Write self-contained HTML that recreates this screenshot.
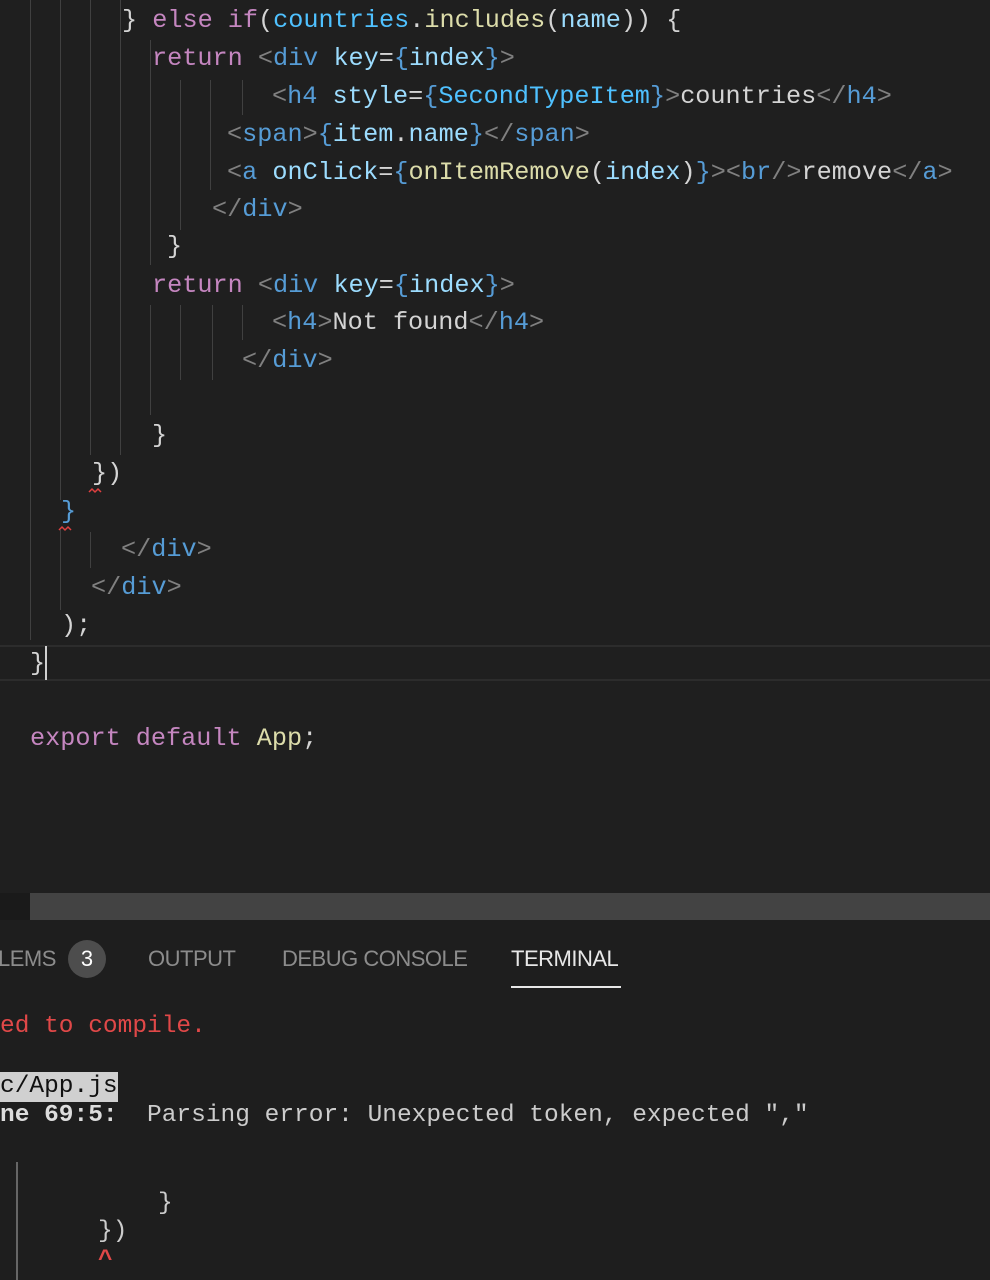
<!DOCTYPE html>
<html><head><meta charset="utf-8"><style>
*{margin:0;padding:0;box-sizing:border-box}
body{width:990px;height:1280px;background:#1f1f1f;overflow:hidden;position:relative;font-family:"Liberation Mono",monospace}
.l{position:absolute;font-size:25.2px;line-height:38px;white-space:pre;color:#d4d4d4;margin-top:2px}
.g{position:absolute;width:1px;background:#404040}
.k{color:#c586c0}.t{color:#808080}.n{color:#569cd6}.a{color:#9cdcfe}.b{color:#569cd6}.v{color:#4fc1ff}.f{color:#dcdcaa}.w{color:#d4d4d4}
.tab{position:absolute;top:946px;font-family:"Liberation Sans",sans-serif;font-size:22px;color:#8c8c8c;letter-spacing:-0.5px}
.m{position:absolute;font-size:24.5px;line-height:30px;white-space:pre;color:#cccccc}
</style></head><body>
<div class="g" style="left:30px;top:0;height:640px"></div>
<div class="g" style="left:60px;top:0;height:500px"></div>
<div class="g" style="left:60px;top:530px;height:80px"></div>
<div class="g" style="left:90px;top:0;height:455px"></div>
<div class="g" style="left:90px;top:532px;height:36px"></div>
<div class="g" style="left:120px;top:0;height:455px"></div>
<div class="g" style="left:150px;top:40px;height:225px"></div>
<div class="g" style="left:150px;top:305px;height:110px"></div>
<div class="g" style="left:180px;top:80px;height:150px"></div>
<div class="g" style="left:180px;top:305px;height:75px"></div>
<div class="g" style="left:210px;top:80px;height:110px"></div>
<div class="g" style="left:212px;top:305px;height:75px"></div>
<div class="g" style="left:242px;top:80px;height:35px"></div>
<div class="g" style="left:242px;top:305px;height:35px"></div>
<div style="position:absolute;left:0;top:645px;width:990px;height:36px;border-top:2px solid #2c2c2c;border-bottom:2px solid #2c2c2c"></div>

<div class="l" style="left:122px;top:0px"><span class="w">} </span><span class="k">else if</span><span class="w">(</span><span class="v">countries</span><span class="w">.</span><span class="f">includes</span><span class="w">(</span><span class="a">name</span><span class="w">)) {</span></div>
<div class="l" style="left:152px;top:38px"><span class="k">return</span> <span class="t">&lt;</span><span class="n">div</span> <span class="a">key</span><span class="w">=</span><span class="b">{</span><span class="a">index</span><span class="b">}</span><span class="t">&gt;</span></div>
<div class="l" style="left:272px;top:76px"><span class="t">&lt;</span><span class="n">h4</span> <span class="a">style</span><span class="w">=</span><span class="b">{</span><span class="v">SecondTypeItem</span><span class="b">}</span><span class="t">&gt;</span>countries<span class="t">&lt;/</span><span class="n">h4</span><span class="t">&gt;</span></div>
<div class="l" style="left:227px;top:114px"><span class="t">&lt;</span><span class="n">span</span><span class="t">&gt;</span><span class="b">{</span><span class="a">item</span>.<span class="a">name</span><span class="b">}</span><span class="t">&lt;/</span><span class="n">span</span><span class="t">&gt;</span></div>
<div class="l" style="left:227px;top:152px"><span class="t">&lt;</span><span class="n">a</span> <span class="a">onClick</span>=<span class="b">{</span><span class="f">onItemRemove</span>(<span class="a">index</span>)<span class="b">}</span><span class="t">&gt;&lt;</span><span class="n">br</span><span class="t">/&gt;</span>remove<span class="t">&lt;/</span><span class="n">a</span><span class="t">&gt;</span></div>
<div class="l" style="left:212px;top:189px"><span class="t">&lt;/</span><span class="n">div</span><span class="t">&gt;</span></div>
<div class="l" style="left:167px;top:226px">}</div>
<div class="l" style="left:152px;top:265px"><span class="k">return</span> <span class="t">&lt;</span><span class="n">div</span> <span class="a">key</span>=<span class="b">{</span><span class="a">index</span><span class="b">}</span><span class="t">&gt;</span></div>
<div class="l" style="left:272px;top:302px"><span class="t">&lt;</span><span class="n">h4</span><span class="t">&gt;</span>Not found<span class="t">&lt;/</span><span class="n">h4</span><span class="t">&gt;</span></div>
<div class="l" style="left:242px;top:340px"><span class="t">&lt;/</span><span class="n">div</span><span class="t">&gt;</span></div>
<div class="l" style="left:152px;top:415px">}</div>
<div class="l" style="left:92px;top:453px">})</div>
<div class="l" style="left:61px;top:491px"><span class="b">}</span></div>
<div class="l" style="left:121px;top:529px"><span class="t">&lt;/</span><span class="n">div</span><span class="t">&gt;</span></div>
<div class="l" style="left:91px;top:567px"><span class="t">&lt;/</span><span class="n">div</span><span class="t">&gt;</span></div>
<div class="l" style="left:61px;top:605px">);</div>
<div class="l" style="left:30px;top:643px">}</div>
<div style="position:absolute;left:45px;top:646px;width:2px;height:34px;background:#d0d0d0"></div>
<div class="l" style="left:30px;top:718px"><span class="k">export default</span> <span class="f">App</span>;</div>
<svg style="position:absolute;left:88px;top:486px" width="16" height="8"><path d="M1 6 L4 3 L7 6 L10 3 L13 6" stroke="#e04040" fill="none" stroke-width="1.5"/></svg>
<svg style="position:absolute;left:58px;top:524px" width="16" height="8"><path d="M1 6 L4 3 L7 6 L10 3 L13 6" stroke="#e04040" fill="none" stroke-width="1.5"/></svg>

<div style="position:absolute;left:0;top:893px;width:30px;height:27px;background:#1a1a1a"></div>
<div style="position:absolute;left:30px;top:893px;width:960px;height:27px;background:#434343"></div>
<div style="position:absolute;left:0;top:920px;width:990px;height:360px;background:#1e1e1e"></div>

<div class="tab" style="left:-2px">LEMS</div>
<div style="position:absolute;left:68px;top:940px;width:38px;height:38px;border-radius:50%;background:#4d4d4d;color:#fff;font-family:'Liberation Sans',sans-serif;font-size:22px;text-align:center;line-height:38px">3</div>
<div class="tab" style="left:148px">OUTPUT</div>
<div class="tab" style="left:282px">DEBUG CONSOLE</div>
<div class="tab" style="left:511px;color:#e7e7e7">TERMINAL</div>
<div style="position:absolute;left:511px;top:986px;width:110px;height:2px;background:#e7e7e7"></div>

<div class="m" style="left:0;top:1012px;color:#e04848">ed to compile.</div>
<div class="m" style="left:0;top:1072px;background:#d0d0d0;color:#111;height:30px;padding-right:0">c/App.js</div>
<div class="m" style="left:0;top:1101px"><b style="color:#ddd">ne 69:5:</b>  Parsing error: Unexpected token, expected ","</div>
<div style="position:absolute;left:16px;top:1162px;width:2px;height:118px;background:#666"></div>
<div class="m" style="left:158px;top:1189px">}</div>
<div class="m" style="left:98px;top:1217px">})</div>
<div class="m" style="left:98px;top:1246px;color:#e04848;font-weight:bold">^</div>
</body></html>
